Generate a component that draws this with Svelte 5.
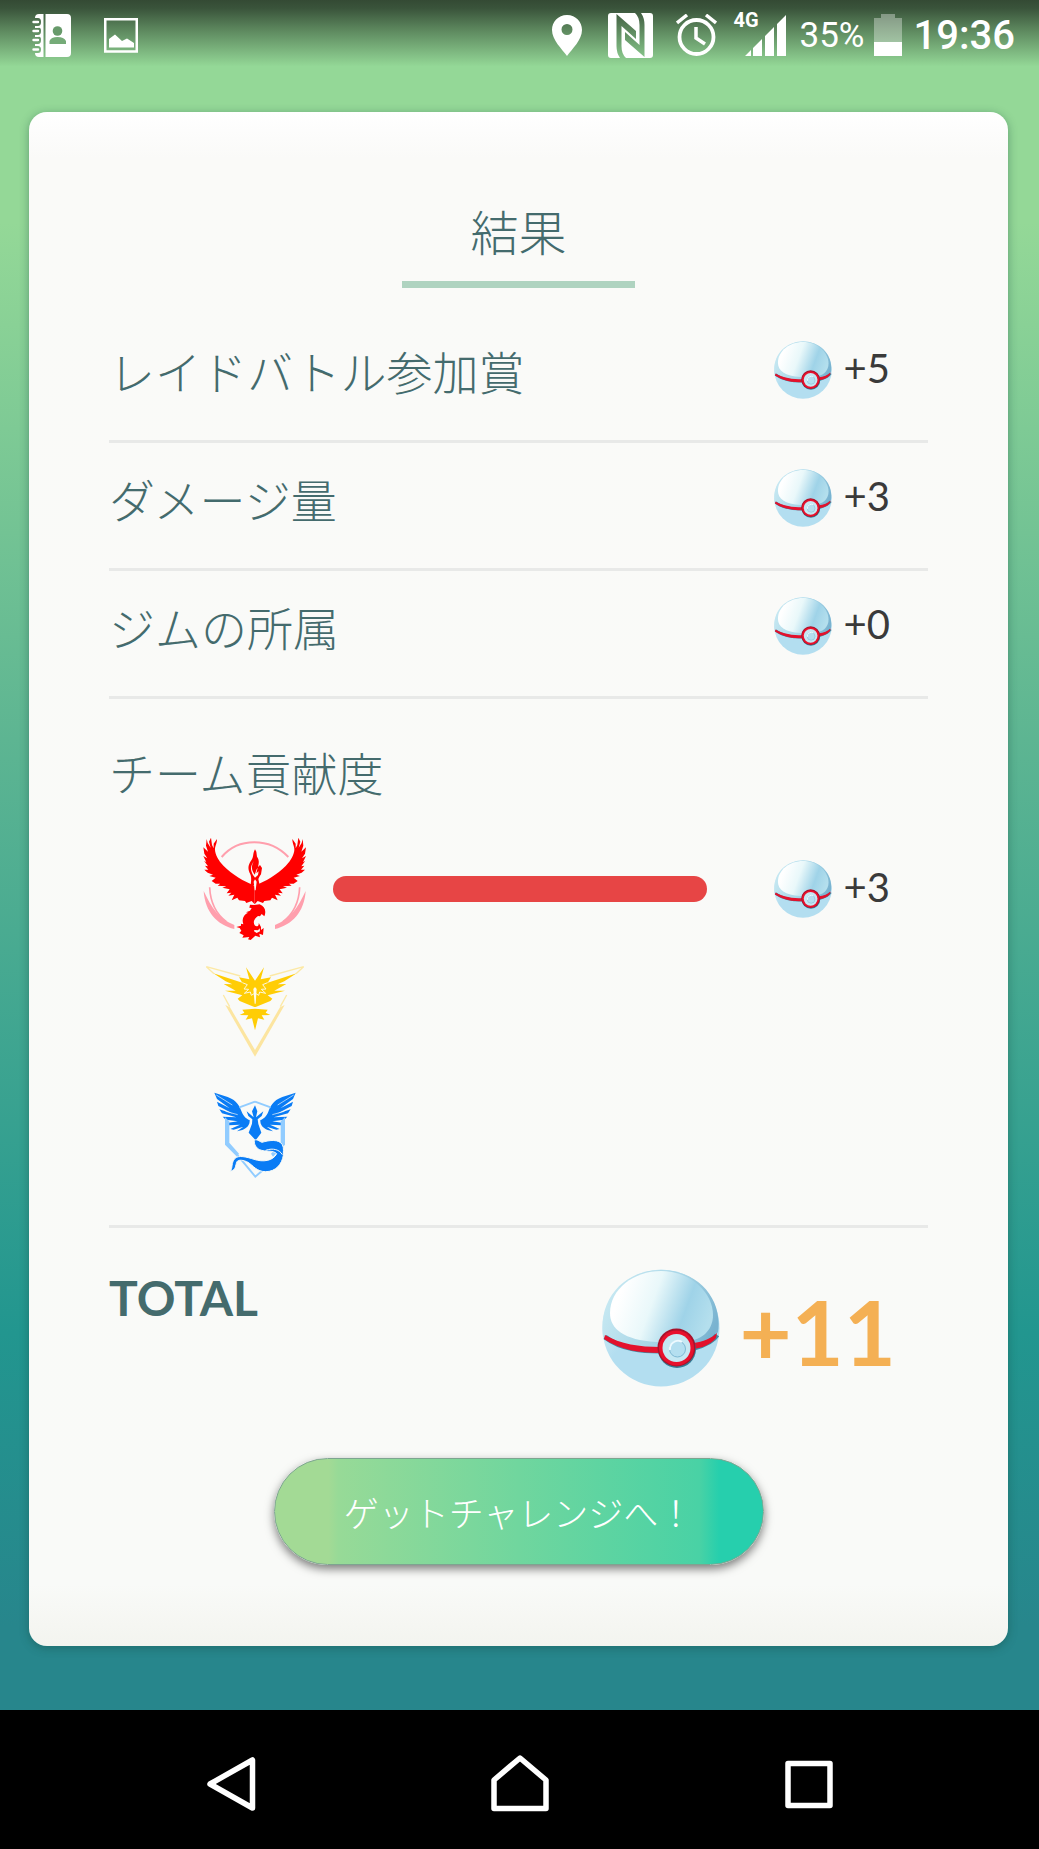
<script>
	const rewards = [
		{ label: 'レイドバトル参加賞', amount: 5 },
		{ label: 'ダメージ量', amount: 3 },
		{ label: 'ジムの所属', amount: 0 }
	];

	// Share of the damage dealt by each team, in percent
	const teams = [
		{ name: 'valor', share: 100, amount: 3 },
		{ name: 'instinct', share: 0, amount: null },
		{ name: 'mystic', share: 0, amount: null }
	];

	const total = 11;
</script>

<!-- Gradients shared by every ball -->
<svg class="defs" aria-hidden="true">
	<defs>
		<linearGradient id="shell" x1="0" y1="0.3" x2="1" y2="0.6">
			<stop offset="0" stop-color="#c9eaf3" />
			<stop offset="0.6" stop-color="#a4d3e5" />
			<stop offset="1" stop-color="#79b3d0" />
		</linearGradient>
		<linearGradient id="shine" x1="0" y1="0.3" x2="1" y2="0.55">
			<stop offset="0.1" stop-color="#fff" />
			<stop offset="0.42" stop-color="#e9f8fa" />
			<stop offset="0.75" stop-color="#9fd3e8" />
			<stop offset="1" stop-color="#b4dfed" />
		</linearGradient>
		<linearGradient id="base" x1="0" y1="0" x2="0.6" y2="0.5">
			<stop offset="0.1" stop-color="#e4f5fa" />
			<stop offset="0.7" stop-color="#b3def0" />
		</linearGradient>
	</defs>
</svg>

{#snippet ball()}
	<svg class="ball" viewBox="0 0 118 118" aria-hidden="true">
		<circle cx="59" cy="59" r="58.500" fill="url(#base)" />
		<path d="M1 68C-4 30 22 1 59 1s62 29 57 62C108 75 96 78 80 80C50 84 22 79 1 68Z" fill="url(#shell)" />
		<path d="M8 44C8 20 32 2 59 2c30 0 52 22 52 44c0 16-12 26-30 27H54C22 71 8 60 8 44Z" fill="url(#shine)" />
		<path d="M3 68C20 81 42 82 58 82M92 79C103 76 112 71 115 66" fill="none" stroke="#3f8ba3" stroke-width="5" />
		<path d="M3 66L2 70C18 81 38 84 58 84V78C38 78 18 75 3 66ZM91 74C101 73 110 69 115 64L114 69C108 76 100 79 91 80Z" fill="#e3112c" />
		<circle cx="75" cy="80" r="19" fill="#357b94" />
		<circle cx="74.500" cy="78.500" r="19" fill="#a8122b" />
		<circle cx="74.500" cy="79" r="17.500" fill="#e8102c" />
		<circle cx="74.500" cy="79" r="14" fill="#c5e8f3" />
		<circle cx="75.500" cy="80" r="8" fill="#b4dff0" stroke="#7fb9d4" />
		<path d="M68 81A8 8 0 0 1 80 73" fill="none" stroke="#eefaff" stroke-width="2" />
	</svg>
{/snippet}

{#snippet valorWing()}
	<path
		fill="#f00"
		d="M197 182C166 170 128 148 104 123C87 106 79 88 78 75C77 65 84 57 84 42L74 56V70L69 60L66 38L60 50L65 68L56 54L53 42L51 62L57 80L43 67L46 86L55 100L43 93L52 112L45 107L57 124L48 122L58 134L46 134L56 143L72 149L61 153L80 158L68 168L80 176H94L86 182L112 184L100 188L122 193L113 205L127 203L118 212L136 209L128 226L145 218L150 226L168 228L172 234L188 228L197 238Z"
	/>
	<path fill="none" stroke="#ff9fad" stroke-width="5" d="M62 187C64 233 84 269 112 290" />
	<path fill="#ff9fad" d="M44 198C68 249 91 283 136 300V312C85 300 48 262 44 198Z" />
{/snippet}

{#snippet instinctHalf()}
	<path
		fill="#ffcd05"
		d="M198 92L171 52L181 88L150 82L160 98L73 70L110 94L130 103L104 102L140 122L108 122L160 136L146 146L152 153L196 171H198ZM198 176L160 179L166 188L152 195L178 196L170 209L189 205L198 241Z"
	/>
	<path fill="none" stroke="#fdf8dc" stroke-width="3" d="M160 98L175 104L165 117L179 118L166 130L184 126L187 136L195 131" />
	<path fill="none" stroke="#fce9a6" stroke-width="4" d="M154 78L52 50L75 71M103 135L122 170" />
	<path fill="#fce5a0" d="M109 165L123 172L198 300V320Z" />
{/snippet}

{#snippet mysticWing()}
	<path
		fill="#0a7cf5"
		d="M76 38L116 51C145 61 153 82 158 95C164 110 173 117 182 120C183 135 174 144 160 150L144 154L163 140L134 149L124 147L153 134L120 136L109 130L146 124L110 119L101 110L142 112L99 100L91 88L132 101L88 78L84 65L122 85L84 57Z"
	/>
	<path fill="none" stroke="#f8faf7" stroke-width="2" d="M82 45L130 75M110 94L146 104" />
	<path fill="none" stroke="#91ccff" stroke-width="6" d="M198 65L151 82" />
	<path fill="#91ccff" d="M108 112L121 124V188L150 221L144 230L108 194Z" />
{/snippet}

<div class="screen">
	<header class="status">
		<div class="notices">
			<svg class="contacts" viewBox="0 0 39 43" aria-label="Contacts" role="img">
				<path fill="#fff" d="M7 0H11.500V43H7Q3 43 3 39H6Q9 39 9 35.500T6 32H3V30H6Q9 30 9 26T6 23H3V21H6Q9 21 9 17T6 14H3V12H6Q9 12 9 8T6 4H3Q3 0 7 0ZM13.500 0H35Q39 0 39 4V39Q39 43 35 43H13.500Z" />
				<path stroke="#fff" stroke-width="2.400" stroke-linecap="round" d="M1.500 8H6M1.500 17H6M1.500 26H6M1.500 35.500H6" />
				<circle cx="25.500" cy="17" r="4.800" fill="#679a6a" />
				<path fill="#75ab78" d="M17.500 30V27Q19 23 25.500 23T34 27V30Z" />
			</svg>
			<svg class="image" viewBox="0 0 34 35" aria-label="Image" role="img">
				<path fill="none" stroke="#fff" stroke-width="2.500" d="M1.250 1.250H32.750V33.500H1.250Z" />
				<path fill="#fff" d="M5 29.500V21L11 16.500L18 23L23 20.500L30 25V29.500Z" />
			</svg>
		</div>
		<div class="system">
			<svg class="pin" viewBox="0 0 30 41" aria-label="Location" role="img">
				<path fill="#fff" fill-rule="evenodd" d="M15 0C6 0 0 7 0 15C0 25 10 34 15 41C20 34 30 25 30 15C30 7 24 0 15 0ZM15 9A5.500 5.500 0 1 1 15 20A5.500 5.500 0 1 1 15 9Z" />
			</svg>
			<svg class="nfc" viewBox="0 0 45 45" aria-label="NFC" role="img">
				<path
					fill="#fff"
					fill-rule="evenodd"
					d="M3 0H42Q45 0 45 3V42Q45 45 42 45H3Q0 45 0 42V3Q0 0 3 0ZM8.500 1L28 18V26L13.500 13V33Q13.500 41 18 45H12Q8.500 40 8.500 33ZM36.500 44L17 27V19L31.500 32V12Q31.500 4 27 0H33Q36.500 5 36.500 12Z"
				/>
			</svg>
			<svg class="alarm" viewBox="0 0 41 42" aria-label="Alarm" role="img">
				<g fill="none" stroke="#fff">
					<circle cx="20.500" cy="23" r="17" stroke-width="3.800" />
					<path stroke-width="3.500" d="M20 13V24L29 30M1 9L11 1M30 1L40 9" />
				</g>
			</svg>
			<div class="signal">
				<span>4G</span>
				<svg viewBox="0 0 41 41" aria-label="Signal" role="img">
					<path fill="#fff" d="M0 41L6 35V41ZM8 33L17 24V41H8ZM20 21L29 12V41H20ZM32 9L41 0V41H32Z" />
				</svg>
			</div>
			<span class="percent">35%</span>
			<svg class="battery" viewBox="0 0 28 42" aria-label="Battery" role="img">
				<path fill="#fff" opacity="0.350" d="M0 4H7V0H21V4H28V28H0Z" />
				<path fill="#fff" d="M0 28H28V42H0Z" />
			</svg>
			<time class="clock">19:36</time>
		</div>
	</header>

	<main class="card">
		<h1>結果</h1>

		<ul class="rewards">
			{#each rewards as reward}
				<li>
					<span class="label">{reward.label}</span>
					<span class="amount">{@render ball()}+{reward.amount}</span>
				</li>
			{/each}
		</ul>

		<section class="teams">
			<h2 class="label">チーム貢献度</h2>
			{#each teams as team}
				<div class="team">
					{#if team.name === 'valor'}
						<svg class="logo" viewBox="0 0 390 381" role="img" aria-label="Valor">
							<path fill="none" stroke="#ff9fad" stroke-width="6" d="M98 96C148 37 242 37 298 96" />
							{@render valorWing()}
							<g transform="translate(394) scale(-1 1)">{@render valorWing()}</g>
							<path fill="red" d="M198 73C190 88 195 96 187 106C178 119 176 129 181 142C188 154 187 162 185 180H212L208 162L212 154L216 148L219 129L213 120L207 126C211 111 210 104 204 95L202 80Z" />
							<path fill="#fafaf7" d="M195 108C185 126 188 134 197 149C201 141 200 135 206 128L202 145L209 139L207 150L198 158L192 150C183 134 184 123 195 108ZM194 170L198 163L203 170L200 196H197Z" />
							<path fill="red" d="M195 240L212 238C229 245 232 259 226 274L218 267L213 274L207 273C194 282 192 292 197 301C203 307 211 303 209 293L216 306V315L224 309L222 330L211 326L213 337L199 332L185 345L177 343L181 336L160 338L164 331L151 324L157 317L152 309L142 306L156 302V296L163 298C157 280 165 269 177 263L171 262L183 257L188 249L181 248L183 239Z" />
							<path fill="#fafaf7" d="M196 315L207 316L212 310L213 319L203 324L195 319Z" />
						</svg>
					{:else if team.name === 'instinct'}
						<svg class="logo" viewBox="0 6 390 381" role="img" aria-label="Instinct">
							{@render instinctHalf()}
							<g transform="translate(396) scale(-1 1)">{@render instinctHalf()}</g>
							<path fill="#fffbea" d="M193 117L198 111L203 117L200 161H197Z" />
						</svg>
					{:else}
						<svg class="logo" viewBox="0 -3 390 381" role="img" aria-label="Mystic">
							{@render mysticWing()}
							<g transform="translate(396) scale(-1 1)">{@render mysticWing()}</g>
							<path fill="none" stroke="#91ccff" stroke-width="6" d="M146 226L199 290L222 270" />
							<path fill="#0a7cf5" d="M198 76L205 94L201 112L223 94L218 108L206 118L208 132L217 158L200 181L179 158L189 131L190 118L178 108L173 94L194 112L189 94Z" />
							<path fill="#0a7cf5" stroke="#f8faf7" stroke-width="3" d="M196 181C203 176 211 184 219 187C242 180 270 177 280 194C286 205 282 218 283 226C279 253 260 275 230 275C203 275 193 257 177 247C164 240 148 238 144 245C138 258 142 269 124 274C132 262 126 249 137 236C148 224 173 231 195 238C222 247 252 243 263 221C251 209 230 217 212 209C201 204 195 193 196 181Z" />
							<path fill="none" stroke="#f8faf7" stroke-width="3" d="M230 211C252 203 272 209 280 224" />
						</svg>
					{/if}
					<div class="track">
						{#if team.share}
							<div class="bar" style:width="{team.share}%"></div>
						{/if}
					</div>
					{#if team.amount !== null}
						<span class="amount">{@render ball()}+{team.amount}</span>
					{/if}
				</div>
			{/each}
		</section>

		<section class="total">
			<h2>TOTAL</h2>
			<span class="amount big">{@render ball()}+{total}</span>
		</section>

		<button class="next" type="button">ゲットチャレンジへ！</button>
	</main>

	<nav class="softkeys">
		<button type="button" aria-label="Back">
			<svg viewBox="0 0 60 60"><path d="M51.500 6V54L9 30Z" /></svg>
		</button>
		<button type="button" aria-label="Home">
			<svg viewBox="0 0 60 60"><path d="M4 54.500V26L30 4L56 26V54.500Z" /></svg>
		</button>
		<button type="button" aria-label="Recent apps">
			<svg viewBox="0 0 60 60"><path d="M9 9.500H51V51.500H9Z" /></svg>
		</button>
	</nav>
</div>

<style>
	:global(body) {
		margin: 0;
		background: #000;
	}
	.defs {
		position: absolute;
		width: 0;
		height: 0;
	}
	.screen {
		min-height: 100vh;
		display: flex;
		flex-direction: column;
		color: #446b6d;
		font-family: 'Noto Sans CJK JP', sans-serif;
		background: linear-gradient(#94d897 0, #94d897 12%, #5db592 40%, #22968f 72%, #27868c 88%);
	}
	svg {
		display: block;
		flex: none;
	}
	h1,
	h2,
	ul {
		margin: 0;
		padding: 0;
		list-style: none;
	}

	/* Status bar */
	.status {
		display: flex;
		justify-content: space-between;
		box-sizing: border-box;
		height: 70px;
		padding: 0 24px 10px 32px;
		color: #fff;
		font-family: Roboto, sans-serif;
		background: linear-gradient(#344a34 0, #3a543b 12%, rgba(60, 88, 60, 0.6) 45%, rgba(148, 216, 151, 0) 95%);
	}
	.notices,
	.system {
		display: flex;
		align-items: center;
		padding-top: 10px;
	}
	.notices {
		gap: 33px;
	}
	.contacts {
		width: 39px;
		height: 43px;
	}
	.image {
		width: 34px;
		height: 35px;
	}
	.pin {
		width: 30px;
		height: 41px;
	}
	.nfc {
		width: 45px;
		height: 45px;
		margin-left: 26px;
	}
	.alarm {
		width: 41px;
		height: 42px;
		margin-left: 23px;
	}
	.signal {
		position: relative;
		margin-left: 28px;
	}
	.signal svg {
		width: 41px;
		height: 41px;
	}
	.signal span {
		position: absolute;
		top: -5px;
		left: -11px;
		font-size: 20px;
		line-height: 20px;
		font-weight: 700;
	}
	.percent {
		margin-left: 14px;
		font-size: 35px;
	}
	.battery {
		width: 28px;
		height: 42px;
		margin-left: 9px;
	}
	.clock {
		margin-left: 12px;
		font-size: 40px;
		font-weight: 500;
	}

	/* Result card */
	.card {
		display: flex;
		flex-direction: column;
		margin: 42px 31px 64px 29px;
		padding: 82px 80px 81px;
		border-radius: 18px;
		background: linear-gradient(#fff 0, #fafaf8 3%, #f9faf8 96%, #f3f4ef 100%);
		box-shadow: 0 2px 10px rgba(20, 70, 60, 0.4);
	}
	h1 {
		align-self: center;
		width: 233px;
		padding-bottom: 15px;
		border-bottom: 7px solid #afd3c0;
		font-size: 48px;
		line-height: 72px;
		font-weight: 300;
		text-align: center;
	}
	.label {
		font-size: 46px;
		line-height: 70px;
		font-weight: 300;
	}
	.rewards {
		margin-top: 27px;
	}
	.rewards li {
		display: flex;
		align-items: center;
		justify-content: space-between;
		box-sizing: border-box;
		height: 128px;
		padding: 0 38px 16px 0;
		border-bottom: 3px solid #e8e9e8;
	}
	.amount {
		display: flex;
		align-items: flex-start;
		gap: 12px;
		color: #3a3a3a;
		font-family: Lato, sans-serif;
		font-size: 40px;
		line-height: 54px;
		font-weight: 400;
	}
	.ball {
		width: 58px;
		height: 58px;
	}
	.teams {
		padding: 37px 0 19px;
		border-bottom: 3px solid #e8e9e8;
	}
	.teams h2 {
		margin-bottom: 19px;
	}
	.team {
		display: flex;
		align-items: center;
		padding: 0 38px 0 80px;
	}
	.logo {
		width: 130px;
		height: 127px;
	}
	.track {
		flex: 1;
		margin: 0 67px 0 14px;
	}
	.bar {
		height: 26px;
		border-radius: 13px;
		background: #e74545;
	}
	.total {
		display: flex;
		align-items: flex-start;
		justify-content: space-between;
		padding: 41px 32px 0 0;
	}
	.total h2 {
		font-family: Lato, sans-serif;
		font-size: 48px;
		line-height: 58px;
		font-weight: 700;
	}
	.big {
		gap: 19px;
		color: #f4b054;
		font-size: 90px;
		line-height: 124px;
		font-weight: 700;
	}
	.big .ball {
		width: 118px;
		height: 118px;
	}
	.next {
		align-self: center;
		width: 490px;
		height: 107px;
		margin-top: 65px;
		padding: 0;
		border: 1px solid #7da590;
		border-radius: 54px;
		color: #fff;
		font-family: 'Noto Sans CJK JP', sans-serif;
		font-size: 35px;
		font-weight: 300;
		background: linear-gradient(90deg, #a3da95 11%, #97da97 13%, #49d2a5 87%, #26cfad 91%);
		box-shadow: 0 4px 10px rgba(0, 0, 0, 0.5);
		cursor: pointer;
	}

	/* Android navigation keys */
	.softkeys {
		display: flex;
		justify-content: center;
		gap: 193px;
		box-sizing: border-box;
		height: 139px;
		margin-top: auto;
		padding-top: 8px;
		background: #000;
	}
	.softkeys button {
		display: grid;
		place-items: center;
		width: 96px;
		padding: 0;
		border: 0;
		background: none;
		cursor: pointer;
	}
	.softkeys svg {
		width: 60px;
		height: 60px;
		fill: none;
		stroke: #fff;
		stroke-width: 5.5;
		stroke-linejoin: round;
	}
</style>
